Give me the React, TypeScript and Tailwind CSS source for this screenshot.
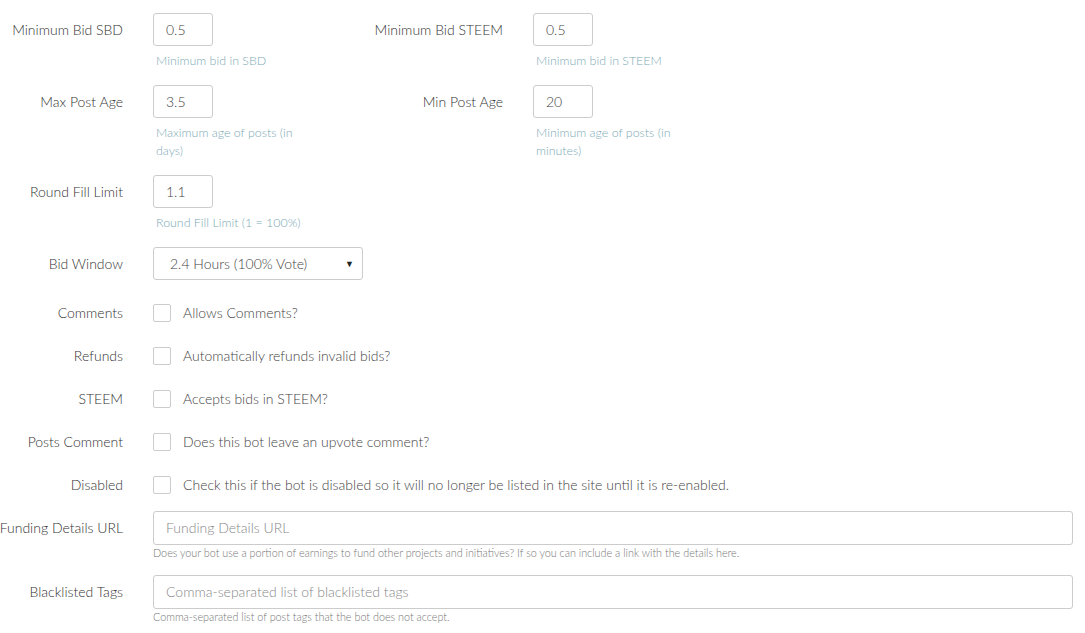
import type { ReactNode } from "react"

const font = { fontFamily: "Lato, 'Open Sans', sans-serif" }

function Label({ children }: { children: ReactNode }) {
  return (
    <div className="w-[123px] shrink-0 whitespace-nowrap text-right text-[14px] leading-[33px] font-light text-[#333]" dir="rtl">
      <span dir="ltr">{children}</span>
    </div>
  )
}

function SmallInput({ value }: { value: string }) {
  return (
    <div className="h-[33px] w-[60px] rounded-[3px] border border-[#ccc] bg-white pl-3 text-[14px] leading-[31px] font-light text-[#444]">
      {value}
    </div>
  )
}

function Help({ children }: { children: ReactNode }) {
  return <div className="mt-[6px] w-[160px] pl-[3px] text-[12.4px] leading-[18px] font-light text-[#7eaab6]">{children}</div>
}

function NumberField({ label, value, help }: { label: string; value: string; help: string }) {
  return (
    <div className="flex w-[380px] gap-[30px]">
      <Label>{label}</Label>
      <div>
        <SmallInput value={value} />
        <Help>{help}</Help>
      </div>
    </div>
  )
}

function CheckRow({ label, text }: { label: string; text: string }) {
  return (
    <div className="flex h-[43px] items-center gap-[30px]">
      <div className="w-[123px] shrink-0 whitespace-nowrap text-right text-[14px] font-light text-[#333]">{label}</div>
      <div className="flex items-center gap-3">
        <span className="size-[18px] rounded-[2px] border border-[#ccc] bg-white" />
        <span className="text-[14px] font-light text-[#444]">{text}</span>
      </div>
    </div>
  )
}

function WideField({ label, placeholder, help }: { label: string; placeholder: string; help: string }) {
  return (
    <div className="flex gap-[30px]">
      <div className="w-[123px] shrink-0 whitespace-nowrap text-right text-[14px] leading-[34px] font-light text-[#333]" dir="rtl">
        <span dir="ltr">{label}</span>
      </div>
      <div className="w-[920px]">
        <div className="h-[34px] rounded-[3px] border border-[#ccc] bg-white pl-3 text-[14px] leading-[32px] font-light text-[#888]">
          {placeholder}
        </div>
        <div className="mt-[1px] text-[10.8px] leading-[14px] font-light text-[#777]">{help}</div>
      </div>
    </div>
  )
}

export default function App() {
  return (
    <div className="h-[633px] w-[1085px] overflow-hidden bg-white pt-[13px]" style={font}>
      <div className="flex">
        <NumberField label="Minimum Bid SBD" value="0.5" help="Minimum bid in SBD" />
        <NumberField label="Minimum Bid STEEM" value="0.5" help="Minimum bid in STEEM" />
      </div>
      <div className="mt-[15px] flex">
        <NumberField label="Max Post Age" value="3.5" help="Maximum age of posts (in days)" />
        <NumberField label="Min Post Age" value="20" help="Minimum age of posts (in minutes)" />
      </div>
      <div className="mt-[15px] flex">
        <NumberField label="Round Fill Limit" value="1.1" help="Round Fill Limit (1 = 100%)" />
      </div>
      <div className="mt-[15px] flex gap-[30px]">
        <Label>Bid Window</Label>
        <div className="flex h-[33px] w-[210px] items-center justify-between rounded-[3px] border border-[#ccc] bg-white pl-4 pr-[8px] text-[14px] font-light text-[#444]">
          <span>2.4 Hours (100% Vote)</span>
          <span className="text-[9px] text-[#222]">▼</span>
        </div>
      </div>
      <div className="mt-[11px]">
        <CheckRow label="Comments" text="Allows Comments?" />
        <CheckRow label="Refunds" text="Automatically refunds invalid bids?" />
        <CheckRow label="STEEM" text="Accepts bids in STEEM?" />
        <CheckRow label="Posts Comment" text="Does this bot leave an upvote comment?" />
        <CheckRow label="Disabled" text="Check this if the bot is disabled so it will no longer be listed in the site until it is re-enabled." />
      </div>
      <div className="mt-[5px]">
        <WideField
          label="Funding Details URL"
          placeholder="Funding Details URL"
          help="Does your bot use a portion of earnings to fund other projects and initiatives? If so you can include a link with the details here."
        />
      </div>
      <div className="mt-[15px]">
        <WideField
          label="Blacklisted Tags"
          placeholder="Comma-separated list of blacklisted tags"
          help="Comma-separated list of post tags that the bot does not accept."
        />
      </div>
    </div>
  )
}
